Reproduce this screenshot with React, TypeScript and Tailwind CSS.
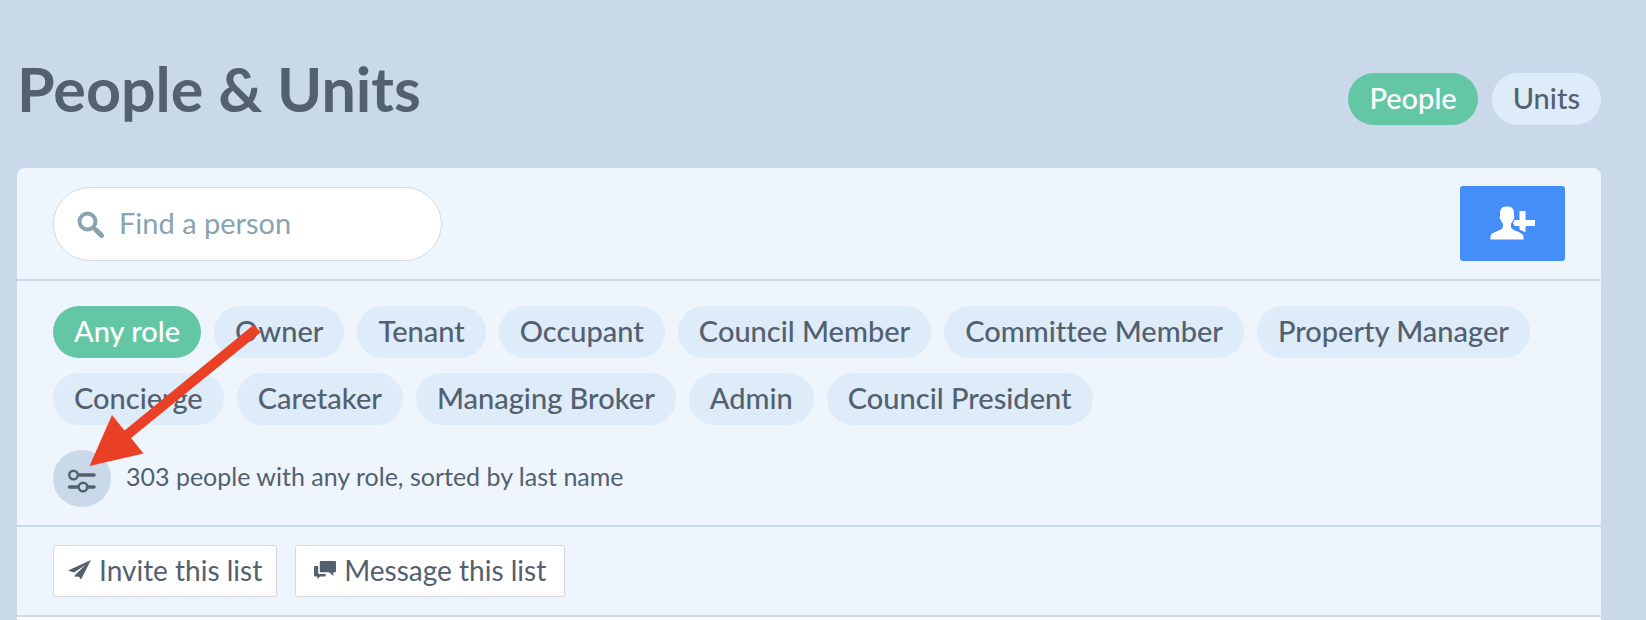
import { useState } from "react";
import clsx from "clsx";

const ROLES = [
  "Any role",
  "Owner",
  "Tenant",
  "Occupant",
  "Council Member",
  "Committee Member",
  "Property Manager",
  "Concierge",
  "Caretaker",
  "Managing Broker",
  "Admin",
  "Council President",
];

const VIEWS = ["People", "Units"];

interface PillProps {
  label: string;
  active: boolean;
  onClick: () => void;
}

function Pill({ label, active, onClick }: PillProps) {
  return (
    <button
      type="button"
      aria-pressed={active}
      onClick={onClick}
      className={clsx(
        "h-[52px] rounded-full px-[21px] pb-[2px] text-[29px] leading-[50px] font-medium whitespace-nowrap",
        active ? "bg-[#63c7a6] text-white" : "bg-[#deebf8] text-[#536070]"
      )}
    >
      {label}
    </button>
  );
}

function SearchIcon() {
  return (
    <svg viewBox="0 0 28 28" className="size-7 shrink-0" fill="none" stroke="#8aa3b1" aria-hidden="true">
      <circle cx="10.5" cy="11.5" r="8" strokeWidth="4" />
      <path d="M17 18l2 2" strokeWidth="4" />
      <path d="M19.5 20.500l5 5" strokeWidth="5" strokeLinecap="round" />
    </svg>
  );
}

function AddPersonIcon() {
  return (
    <svg viewBox="0 0 45 34" className="h-[34px] w-[45px]" fill="#fff" aria-hidden="true">
      <path d="M17 .5c-4.500 0-7 2-7 6.500l.2 3c-.8.3-.7 3 .4 3.500.5 2 1.400 3.200 2.400 4v3c0 2-2 3.200-5 4.300C3.500 26.500.5 28 .5 31v2.500h33V31c0-2.500-2-4-6-5.500-4-1.600-6.500-2.500-6.500-5v-3c1-.8 1.900-2 2.400-4 1.100-.5 1.200-3.200.4-3.500l.2-3c0-4.500-2.500-6.500-7-6.500z" />
      <path d="M29.500 5h6v9H45v6h-9.500v6.500l-6-2.800V20h-4.700l-1.800-2.500 1.500-3.500h5z" />
      <path d="M22.500 21.200c1.500 1.600 10 3.600 13 6.300" stroke="#458df8" strokeWidth="1.500" fill="none" />
    </svg>
  );
}

function SlidersIcon() {
  return (
    <svg viewBox="0 0 30 24" className="h-6 w-[30px]" fill="none" stroke="#536070" strokeWidth="3.500" strokeLinecap="round" aria-hidden="true">
      <path d="M12 6h15M2.500 18h8M20.500 18h6.500" />
      <circle cx="6.500" cy="6" r="4.300" strokeWidth="2.400" />
      <circle cx="16" cy="18" r="4.300" strokeWidth="2.400" />
    </svg>
  );
}

function PlaneIcon() {
  return (
    <svg viewBox="0 0 23 20" className="h-5 w-[23px]" fill="#536070" aria-hidden="true">
      <path d="M23 0L0 10.500l6 2L17.500 5 8 14l-2 2.500 5 .2 2 2.800z" />
    </svg>
  );
}

function MessagesIcon() {
  return (
    <svg viewBox="0 0 22 18" className="h-[18px] w-[22px]" fill="#536070" aria-hidden="true">
      <path d="M7 0H21Q22 0 22 1V10.300Q22 11.300 21 11.300H19.300V15L15 11.300H6.800Q5.800 11.300 5.800 10.300V1Q5.800 0 7 0z" />
      <path d="M1 5H4.200V11.800Q4.200 13 5.500 13H11.700V14.400Q11.700 15.400 10.700 15.400H6L3.300 18V15.400H1Q0 15.400 0 14.400V6Q0 5 1 5z" />
    </svg>
  );
}

export default function App() {
  const [view, setView] = useState("People");
  const [role, setRole] = useState("Any role");
  const [search, setSearch] = useState("");

  return (
    <div className="min-h-screen bg-[#cad9e9] pr-[45px] pl-[17px] font-['Lato','Liberation_Sans',sans-serif] text-[#536070] [font-variant-ligatures:none]">
      <header className="flex items-end justify-between pt-[52px] pb-[43px]">
        <h1 className="text-[61px] leading-[73px] font-bold">People &amp; Units</h1>
        <div className="flex gap-[14px]">
          {VIEWS.map((v) => (
            <Pill key={v} label={v} active={view === v} onClick={() => setView(v)} />
          ))}
        </div>
      </header>

      <main className="overflow-hidden rounded-t-lg bg-[#eef5fc]">
        {/* Search */}
        <div className="flex items-center justify-between border-b-2 border-[#cad9e9] px-9 py-[18px]">
          <label className="flex h-[74px] w-[389px] items-center gap-[14px] rounded-full border border-[#d6d9dc] bg-white pr-6 pl-[23px]">
            <SearchIcon />
            <input
              type="text"
              aria-label="Find a person"
              placeholder="Find a person"
              value={search}
              onChange={(e) => setSearch(e.target.value)}
              className="min-w-0 flex-1 pb-[2px] text-[29px] outline-none placeholder:text-[#8aa3b1]"
            />
          </label>
          <button
            type="button"
            aria-label="Add person"
            className="flex h-[75px] w-[105px] items-center justify-center rounded-[3px] bg-[#458df8] pb-[2px]"
          >
            <AddPersonIcon />
          </button>
        </div>

        {/* Role filters */}
        <div className="relative border-b-2 border-[#cad9e9] px-9 pt-[25px] pb-[18px]">
          <div className="flex flex-wrap gap-x-[13px] gap-y-[15px]">
            {ROLES.map((r) => (
              <Pill key={r} label={r} active={role === r} onClick={() => setRole(r)} />
            ))}
          </div>
          <div className="mt-[25px] flex items-center gap-[15px]">
            <button
              type="button"
              aria-label="Filter and sort"
              className="flex h-[57px] w-[58px] items-center justify-center rounded-full bg-[#cad9e9] pt-1"
            >
              <SlidersIcon />
            </button>
            <p className="pb-[6px] text-[25px] leading-8">303 people with any role, sorted by last name</p>
          </div>
          {/* Arrow pointing at the filter button */}
          <svg
            viewBox="0 0 172 142"
            className="pointer-events-none absolute top-11 left-[72px] h-[142px] w-[172px]"
            fill="#ea4025"
            aria-hidden="true"
          >
            <path d="M.5 141L23 90l12.500 15.500L165 -.5l6.500 8L42 113l12.500 15.500z" />
          </svg>
        </div>

        {/* List actions */}
        <div className="flex gap-[18px] border-b-2 border-[#cad9e9] px-9 py-[18px]">
          <button
            type="button"
            className="flex h-[52px] items-center gap-2 rounded-[3px] border border-[#d6d9dc] bg-white px-[14px] pb-[2px] text-[28px]"
          >
            <PlaneIcon />
            Invite this list
          </button>
          <button
            type="button"
            className="flex h-[52px] items-center gap-2 rounded-[3px] border border-[#d6d9dc] bg-white px-[18px] pb-[2px] text-[28px]"
          >
            <MessagesIcon />
            Message this list
          </button>
        </div>
        <div className="h-1 bg-white" />
      </main>
    </div>
  );
}
